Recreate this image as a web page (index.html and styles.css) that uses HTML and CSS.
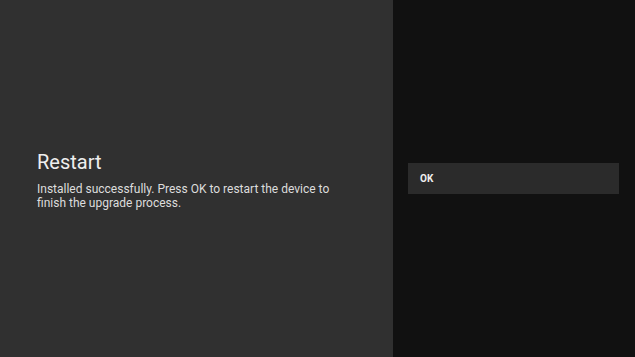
FILE: index.html
```html
<!DOCTYPE html>
<html lang="en">
<head>
    <meta charset="UTF-8">
    <meta name="viewport" content="width=device-width, initial-scale=1.0">
    <title>Restart</title>
    <link rel="stylesheet" href="styles.css">
</head>
<body>
    <div class="screen">
        <div class="guidance">
            <h1 class="title">Restart</h1>
            <p class="description">Installed successfully. Press OK to restart the device to finish the upgrade process.</p>
        </div>
        <div class="actions">
            <button class="action-button">OK</button>
        </div>
    </div>
</body>
</html>
```

FILE: styles.css
```css
body {
    margin: 0;
    font-family: Roboto, "Noto Sans", sans-serif;
    background: #111111;
}

.screen {
    display: flex;
    width: 635px;
    height: 357px;
}

.guidance {
    width: 393px;
    background: #303030;
    display: flex;
    flex-direction: column;
    justify-content: center;
    padding: 2px 50px 0 37px;
    box-sizing: border-box;
    color: #eeeeee;
}

.title {
    margin: 0 0 8px 0;
    font-size: 20px;
    font-weight: 400;
    line-height: 24px;
}

.description {
    margin: 0;
    font-size: 12px;
    line-height: 14px;
    color: #dddddd;
}

.actions {
    flex: 1;
    padding: 0 16px 0 15px;
    display: flex;
    flex-direction: column;
    justify-content: center;
}

.action-button {
    height: 31px;
    margin-bottom: 0;
    background: #2b2b2b;
    border: none;
    color: #eeeeee;
    font-family: Roboto, "Noto Sans", sans-serif;
    font-size: 10px;
    font-weight: 700;
    text-align: left;
    padding: 0 12px;
}
```
